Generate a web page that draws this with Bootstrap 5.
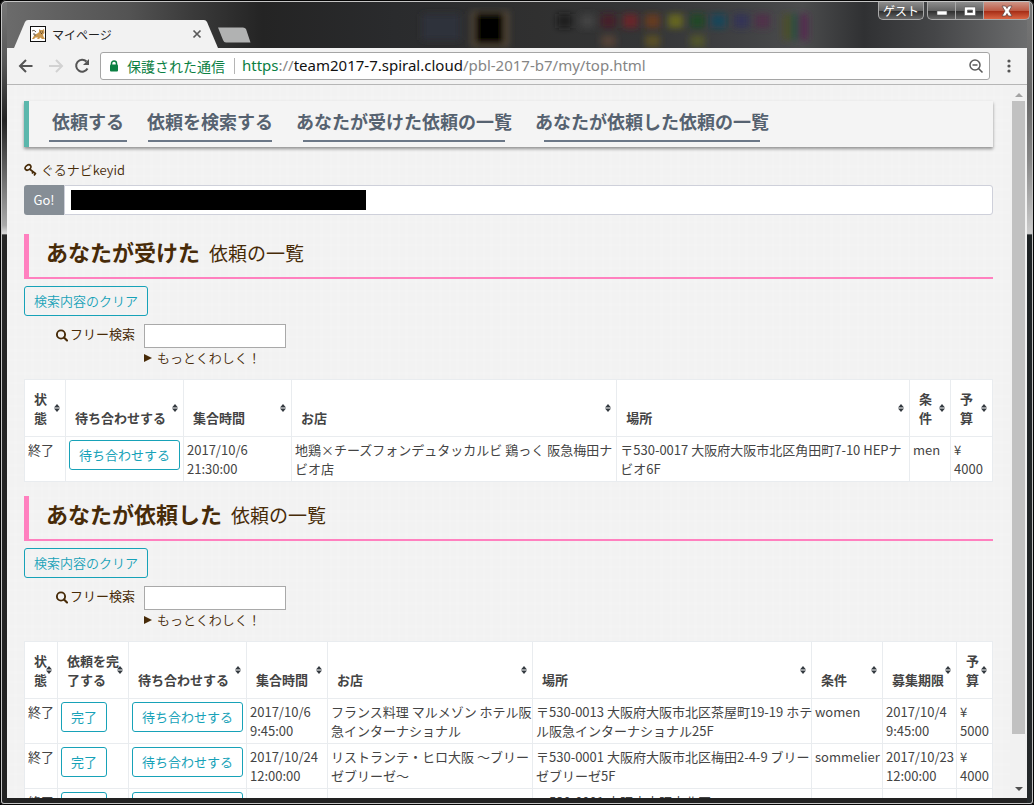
<!DOCTYPE html>
<html lang="ja">
<head>
<meta charset="utf-8">
<meta name="viewport" content="width=device-width, initial-scale=1">
<title>マイページ</title>
<link href="https://cdn.jsdelivr.net/npm/bootstrap@5.3.0/dist/css/bootstrap.min.css" rel="stylesheet">
<style>
  :root { --teal: #17a2b8; --brown: #472b08; }
  body { font-family: "Noto Sans CJK JP", "Noto Sans", sans-serif; font-size: 13px; line-height: 19px; color: var(--brown); background: #000; }
  button, input { font-family: inherit; }
  .thin { font-weight: 350; }

  /* window frame */
  .win { height: 100vh; padding: 2px 7px 7px; border-radius: 6px 6px 4px 4px; box-shadow: inset 0 0 0 1px #050505, inset 0 0 0 2px #c4c4c4;
    background:
      linear-gradient(180deg, #777 0, #555 8%, #222 15%, #555 20%, #aaa 28%, #ddd 29%, #262626 29.2%, #222) left / 7px 100% no-repeat,
      linear-gradient(180deg, #777 0, #666 12%, #888 20%, #ccc 29%, #1d2224 29.2%, #24282a) right / 7px 100% no-repeat,
      #222; }
  .titlebar { height: 46px; padding-left: 7px;
    background: linear-gradient(90deg, #6b6b6b 0, #535353 12%, #3b3b3b 18%, #242424 25%, #2a2b2d 38%, #303030 52%, #343536 62%, #404143 72%, #4b4c4d 78%, #303133 84%, #454648 91%, #6c6d6e 100%); }
  .backdrop { left: 0; top: 0; }
  .tab-shape { width: 204px; height: 28px; }
  .tab-shape > svg { left: 0; top: 0; }
  .tab-face { padding: 0 16px 0 16px; color: #222; font-size: 12px; gap: 6px; }
  .close-tab { background: none; border: 0; padding: 0; line-height: 0; }
  .new-tab { background: none; border: 0; padding: 0 0 5px; line-height: 0; }
  .caption-btn { border: 1px solid #aaa; border-top: 0; height: 18px; padding: 0; color: #fff; line-height: 0;
    background: linear-gradient(#8d8d8d, #646464 50%, #2c2c2c 52%, #666); }
  .guest { width: 46px; border-radius: 0 0 5px 5px; font-size: 12px; line-height: 16px; margin-right: 3px; }
  .caps { margin-right: -3px; }
  .cap-min { width: 29px; border-radius: 0 0 0 5px; }
  .cap-max { width: 28px; border-left: 0; }
  .cap-close { width: 46px; border-left: 0; border-radius: 0 0 5px 0; background: linear-gradient(#cd9587, #bd5c47 50%, #a32a14 52%, #d96544); }

  .toolbar { height: 36px; padding: 0 11px 1px 11px; background: #f2f2f2; }
  .toolbar button { background: none; border: 0; padding: 0; line-height: 0; }
  .reload { margin-left: 10px; }
  .omnibox { height: 28px; background: #fff; border: 1px solid #a5a5a5; border-radius: 3px; padding: 0 5px 0 8px; margin-left: 10px; margin-right: 12px; }
  .secure { font-size: 14px; color: #0b8043; border-right: 1px solid #b5b5b5; line-height: 16px; padding-right: 9px; margin-right: 7px; }
  .url { font-family: "Noto Sans", sans-serif; font-size: 15px; color: #858585; }
  .url b { font-weight: 400; color: #111; }
  .url i { font-style: normal; color: #0b8043; }

  .view { min-height: 0; border-top: 1px solid #b6b6b6; background: #f3f3f3; }
  .page { min-width: 0; padding: 16px 17px 0;
    background:
      repeating-linear-gradient(90deg, #ffffff18 0 2px, #0000 2px 7px, #ffffff18 7px 10px, #0000 10px 17px),
      repeating-linear-gradient(0deg, #ffffff18 0 2px, #0000 2px 9px, #ffffff18 9px 12px, #0000 12px 23px), #f2f2f2; }
  .vbar { width: 17px; background: #f1f1f1; padding: 5px 0; }
  .thumb { width: 13px; height: 90%; background: #c1c1c1; }

  .mainmenu { border-left: 5px solid #5bb7ac; background: #f4f4f4; box-shadow: 0 2px 3px #0006; padding: 2px 14px 7px; gap: 5px; }
  .mainmenu a { position: relative; padding: 6px 9px; font-size: 18px; line-height: 25px; font-weight: 700; color: #566270; text-decoration: none; }
  .mainmenu a::after { content: ""; position: absolute; left: 7%; right: 7%; bottom: -2px; height: 2px; background: #6b7787; }

  .keylabel { margin: 13px 0 6px; }
  .go { width: 40px; height: 30px; padding: 0; font-size: 13px; background: #868e96; color: #fff; border-radius: 3px 0 0 3px; }
  .keyfield { height: 30px; min-height: 0; border: 1px solid #ced0da; border-radius: 0 3px 3px 0; padding: 4px 8px; font-size: 13px; }
  .keyrow { margin-bottom: 19px; }
  .redact { left: 7px; top: 5px; width: 295px; height: 20px; background: #000; }

  .heading { border-left: 5px solid #ff80bf; border-bottom: 2px solid #ff80bf; font-size: 22px; line-height: 33px; padding: 1px 17px 9px; margin: 0 0 7px; font-weight: 700; color: var(--brown); }
  .heading span { font-size: 19px; font-weight: 400; line-height: 1; margin-left: 4px; }
  .btn-teal { --bs-btn-color: var(--teal); --bs-btn-border-color: var(--teal); --bs-btn-hover-bg: var(--teal); --bs-btn-hover-color: #fff; --bs-btn-hover-border-color: var(--teal);
    --bs-btn-padding-x: 9px; --bs-btn-padding-y: 4px; --bs-btn-font-size: 13px; --bs-btn-line-height: 20px; --bs-btn-border-radius: 3px; display: block; white-space: nowrap; }
  .btn-teal.thin { font-weight: 350; line-height: 19px; padding-bottom: 5px; }
  .search { padding-left: 31px; margin: 8px 0 12px; gap: 9px; }
  .search input { display: block; width: 142px; height: 24px; border: 1px solid #a9a9a9; background: #fff; }
  .search label svg { margin-right: 2px; }
  summary { list-style: none; }
  .tri { margin-right: 5px; }

  .list { table-layout: fixed; margin: 0 0 14px; background: #fff; font-size: 13px; border-color: #e9ecef; --bs-table-bg: #fff; --bs-table-color: #444; }
  .list th { position: relative; padding: 9px 8px 9px 9px; vertical-align: bottom; color: #444; border-width: 1px; }
  .list td { padding: 3px 1px 3px 3px; vertical-align: top; border-width: 1px; color: #444; }
  .list > :not(caption) > * { border-width: 0; }
  .list .sorter { position: absolute; right: 5px; top: 50%; transform: translateY(-50%); }
</style>
</head>
<body>
<svg class="d-none">
  <symbol id="sort" viewBox="0 0 6 8"><path d="M3 0 6 3.500H0zM3 8 0 4.500H6z" fill="#343a40"/></symbol>
  <symbol id="mag" viewBox="0 0 13 13"><circle cx="6" cy="5.500" r="4.100" fill="none" stroke="#472b08" stroke-width="1.900"/><path d="m9 8.500 3 3" stroke="#472b08" stroke-width="2.100" stroke-linecap="round"/></symbol>
</svg>
<div class="win d-flex flex-column">
  <header class="titlebar d-flex align-items-end position-relative flex-shrink-0">
    <svg class="backdrop position-absolute w-100 h-100" viewBox="0 0 1020 46" preserveAspectRatio="none" aria-hidden="true">
      <defs><filter id="soft"><feGaussianBlur stdDeviation="3"/></filter></defs>
      <g filter="url(#soft)">
        <rect x="415" y="12" width="38" height="26" fill="#2e323b"/>
        <rect x="464" y="9" width="38" height="36" fill="#544a38"/><rect x="468" y="11" width="29" height="31" fill="#030303"/>
        <g opacity=".8"><rect x="550" y="12" width="15" height="14" fill="#171717"/><rect x="573" y="12" width="15" height="14" fill="#454545"/><rect x="594" y="12" width="15" height="14" fill="#4b1d25"/>
        <rect x="616" y="12" width="15" height="14" fill="#751f27"/><rect x="638" y="12" width="15" height="14" fill="#713b1d"/><rect x="661" y="12" width="15" height="14" fill="#71701c"/>
        <rect x="683" y="12" width="15" height="14" fill="#164c24"/><rect x="704" y="12" width="15" height="14" fill="#124960"/><rect x="727" y="12" width="15" height="14" fill="#30305a"/><rect x="748" y="12" width="15" height="14" fill="#532a4b"/>
        <rect x="776" y="12" width="8" height="26" fill="#4d4f20"/><rect x="784" y="12" width="8" height="26" fill="#205040"/><rect x="792" y="12" width="9" height="26" fill="#552050"/>
        <rect x="594" y="33" width="15" height="12" fill="#5c4539"/><rect x="638" y="33" width="15" height="12" fill="#615423"/><rect x="683" y="33" width="15" height="12" fill="#555b28"/></g>
      </g>
    </svg>
    <div class="tab-shape position-relative">
      <svg class="position-absolute w-100 h-100" viewBox="0 0 204 28" preserveAspectRatio="none" aria-hidden="true"><path d="M0 28 11 2Q12 0 14 0H190Q192 0 193 2L204 28Z" fill="#f2f2f2"/></svg>
      <div class="tab-face position-relative d-flex align-items-center h-100">
        <svg width="16" height="16" viewBox="0 0 16 16" aria-hidden="true"><rect x=".5" y=".5" width="15" height="15" fill="#fff" stroke="#111"/><path d="m2 13 2.500-4L8 7l1-1V3l1.500 1h2L14 3l.5 4-1.500 1.500.5 2 1.500 2.500h-3l-1.500-1.500L9 13H7l1-1.500H5.500L4 13Z" fill="#c9974f"/><path d="M2 5q2-2 4 1M3 8q3-1 2 2" fill="none" stroke="#665c50"/><path d="M10 6h1M12 6h1M11 7.500h1" stroke="#543"/></svg>
        <span class="flex-grow-1">マイページ</span>
        <button class="close-tab" aria-label="タブを閉じる"><svg width="10" height="10" viewBox="0 0 10 10"><path d="m1.500 1.500 7 7m0-7-7 7" stroke="#5a5a5a" stroke-width="1.700"/></svg></button>
      </div>
    </div>
    <button class="new-tab position-relative" aria-label="新しいタブ"><svg width="33" height="16" viewBox="0 0 33 16"><path d="M0 .5H25Q27 .5 28 2L32.500 15.500H8Q6 15.500 5 13Z" fill="#b1b2b2"/></svg></button>
    <div class="ms-auto d-flex align-self-start position-relative caps">
      <button class="caption-btn guest">ゲスト</button>
      <button class="caption-btn cap-min" aria-label="最小化"><svg width="12" height="12"><rect x="1" y="6" width="10" height="4" fill="#fff" stroke="#555" stroke-width=".6"/></svg></button>
      <button class="caption-btn cap-max" aria-label="最大化"><svg width="12" height="12"><path d="M.5 2h11v8.500H.5zM3.500 5v2.500h5V5z" fill="#fff" fill-rule="evenodd" stroke="#555" stroke-width=".6"/></svg></button>
      <button class="caption-btn cap-close" aria-label="閉じる"><svg width="12" height="12" viewBox="0 0 12 12"><path d="M1 1h3.500L6 3.500 7.500 1H11L8 6l3 5H7.500L6 8.500 4.500 11H1L4 6z" fill="#fff" stroke="#544" stroke-width=".7"/></svg></button>
    </div>
  </header>

  <div class="toolbar d-flex align-items-center flex-shrink-0">
    <button aria-label="戻る"><svg width="15" height="14" viewBox="0 0 15 14"><path d="M14.500 7H2M8 1 2 7l6 6" fill="none" stroke="#555" stroke-width="2"/></svg></button>
    <button class="ms-3" aria-label="進む" disabled><svg width="15" height="14" viewBox="0 0 15 14"><path d="M0 7h12M7 1l6 6-6 6" fill="none" stroke="#d2d2d2" stroke-width="2"/></svg></button>
    <button class="reload" aria-label="再読み込み"><svg width="16" height="16" viewBox="0 0 16 16"><path d="M13.500 10.500a6 6 0 1 1-1-7" fill="none" stroke="#555" stroke-width="2"/><path d="M15 1v6H9z" fill="#555"/></svg></button>
    <div class="omnibox flex-grow-1 d-flex align-items-center">
      <svg class="me-2" width="10" height="12" viewBox="0 0 10 12" aria-hidden="true"><path d="M2.500 5V3.500a2.500 2.500 0 0 1 5 0V5" fill="none" stroke="#0b8043" stroke-width="1.500"/><rect x="1" y="4.500" width="8" height="7" rx="1" fill="#0b8043"/></svg>
      <span class="secure text-nowrap">保護された通信</span>
      <span class="url flex-grow-1 text-nowrap"><i>https</i>://<b>team2017-7.spiral.cloud</b>/pbl-2017-b7/my/top.html</span>
      <button aria-label="ズーム"><svg width="16" height="16" viewBox="0 0 16 16"><circle cx="7" cy="7" r="5" fill="none" stroke="#5a5a5a" stroke-width="1.500"/><path d="M4.500 7h5M10.500 10.500 14.500 14.500" stroke="#5a5a5a" stroke-width="1.600"/></svg></button>
    </div>
    <button aria-label="メニュー"><svg width="14" height="16" viewBox="0 0 14 16"><g fill="#555"><circle cx="7" cy="3" r="1.600"/><circle cx="7" cy="8" r="1.600"/><circle cx="7" cy="13" r="1.600"/></g></svg></button>
  </div>

  <div class="view d-flex flex-grow-1 overflow-hidden">
    <main class="page flex-grow-1">
      <nav class="mainmenu d-flex">
        <a href="#">依頼する</a><a href="#">依頼を検索する</a><a href="#">あなたが受けた依頼の一覧</a><a href="#">あなたが依頼した依頼の一覧</a>
      </nav>

      <label class="keylabel d-flex align-items-center gap-1 thin" for="keyid">
        <svg width="13" height="13" viewBox="0 0 13 13" aria-hidden="true"><ellipse cx="4" cy="4.500" rx="3.200" ry="2.300" transform="rotate(-35 4 4.500)" fill="none" stroke="#472b08" stroke-width="1.700"/><path d="m5.500 6 6.500 5M8 10.500l1.500-2M10 12.500l1.500-2" fill="none" stroke="#472b08" stroke-width="1.700"/></svg>
        <span>ぐるナビkeyid</span>
      </label>
      <div class="keyrow d-flex">
        <button class="btn go border-0">Go!</button>
        <div class="position-relative flex-grow-1">
          <input class="form-control keyfield" id="keyid" type="text">
          <span class="redact position-absolute"></span>
        </div>
      </div>

      <h2 class="heading">あなたが受けた <span>依頼の一覧</span></h2>
      <button class="btn btn-teal thin">検索内容のクリア</button>
      <div class="search d-flex align-items-start">
        <label for="free1"><svg width="13" height="13" aria-hidden="true"><use href="#mag"/></svg>フリー検索</label>
        <div>
          <input id="free1" type="text">
          <details><summary class="thin d-flex align-items-center"><svg class="tri" width="8" height="8"><path d="M0 0 8 4 0 8z" fill="#472b08"/></svg>もっとくわしく！</summary></details>
        </div>
      </div>
      <table class="table table-bordered list">
        <colgroup><col style="width:41px"><col style="width:118px"><col style="width:108px"><col style="width:33.6%"><col><col style="width:41px"><col style="width:42px"></colgroup>
        <thead><tr>
          <th>状態<svg class="sorter" width="6" height="8"><use href="#sort"/></svg></th>
          <th>待ち合わせする<svg class="sorter" width="6" height="8"><use href="#sort"/></svg></th>
          <th>集合時間<svg class="sorter" width="6" height="8"><use href="#sort"/></svg></th>
          <th>お店<svg class="sorter" width="6" height="8"><use href="#sort"/></svg></th>
          <th>場所<svg class="sorter" width="6" height="8"><use href="#sort"/></svg></th>
          <th>条件<svg class="sorter" width="6" height="8"><use href="#sort"/></svg></th>
          <th>予算<svg class="sorter" width="6" height="8"><use href="#sort"/></svg></th>
        </tr></thead>
        <tbody><tr>
          <td>終了</td><td><button class="btn btn-teal">待ち合わせする</button></td><td>2017/10/6 21:30:00</td>
          <td>地鶏×チーズフォンデュタッカルビ 鶏っく 阪急梅田ナ<wbr>ビオ店</td><td>〒530-0017 大阪府大阪市北区角田町7-10 HEPナ<wbr>ビオ6F</td><td>men</td><td>¥<br>4000</td>
        </tr></tbody>
      </table>

      <h2 class="heading">あなたが依頼した <span>依頼の一覧</span></h2>
      <button class="btn btn-teal thin">検索内容のクリア</button>
      <div class="search d-flex align-items-start">
        <label for="free2"><svg width="13" height="13" aria-hidden="true"><use href="#mag"/></svg>フリー検索</label>
        <div>
          <input id="free2" type="text">
          <details><summary class="thin d-flex align-items-center"><svg class="tri" width="8" height="8"><path d="M0 0 8 4 0 8z" fill="#472b08"/></svg>もっとくわしく！</summary></details>
        </div>
      </div>
      <table class="table table-bordered list">
        <colgroup><col style="width:33px"><col style="width:71px"><col style="width:118px"><col style="width:81px"><col style="width:205px"><col><col style="width:71px"><col style="width:74px"><col style="width:36px"></colgroup>
        <thead><tr>
          <th>状態<svg class="sorter" width="6" height="8"><use href="#sort"/></svg></th>
          <th>依頼を完了する<svg class="sorter" width="6" height="8"><use href="#sort"/></svg></th>
          <th>待ち合わせする<svg class="sorter" width="6" height="8"><use href="#sort"/></svg></th>
          <th>集合時間<svg class="sorter" width="6" height="8"><use href="#sort"/></svg></th>
          <th>お店<svg class="sorter" width="6" height="8"><use href="#sort"/></svg></th>
          <th>場所<svg class="sorter" width="6" height="8"><use href="#sort"/></svg></th>
          <th>条件<svg class="sorter" width="6" height="8"><use href="#sort"/></svg></th>
          <th>募集期限<svg class="sorter" width="6" height="8"><use href="#sort"/></svg></th>
          <th>予算<svg class="sorter" width="6" height="8"><use href="#sort"/></svg></th>
        </tr></thead>
        <tbody>
          <tr><td>終了</td><td><button class="btn btn-teal">完了</button></td><td><button class="btn btn-teal">待ち合わせする</button></td><td>2017/10/6 9:45:00</td>
            <td class="text-nowrap">フランス料理 マルメゾン ホテル阪<br>急インターナショナル</td><td class="text-nowrap">〒530-0013 大阪府大阪市北区茶屋町19-19 ホテ<br>ル阪急インターナショナル25F</td><td>women</td><td>2017/10/4 9:45:00</td><td>¥<br>5000</td></tr>
          <tr><td>終了</td><td><button class="btn btn-teal">完了</button></td><td><button class="btn btn-teal">待ち合わせする</button></td><td>2017/10/24 12:00:00</td>
            <td class="text-nowrap">リストランテ・ヒロ大阪 ～ブリー<br>ゼブリーゼ～</td><td class="text-nowrap">〒530-0001 大阪府大阪市北区梅田2-4-9 ブリー<br>ゼブリーゼ5F</td><td>sommelier</td><td>2017/10/23 12:00:00</td><td>¥<br>4000</td></tr>
          <tr><td>終了</td><td><button class="btn btn-teal">完了</button></td><td><button class="btn btn-teal">待ち合わせする</button></td><td></td>
            <td></td><td>〒530-0001 大阪府大阪市北区</td><td></td><td></td><td></td></tr>
        </tbody>
      </table>
    </main>
    <div class="vbar flex-shrink-0 d-flex flex-column align-items-center" aria-hidden="true">
      <svg width="8" height="11" class="flex-shrink-0"><path d="M0 7 4 3 8 7z" fill="#a3a3a3"/></svg>
      <div class="thumb"></div>
      <svg width="8" height="8" class="flex-shrink-0 mt-auto"><path d="M0 2h8L4 6z" fill="#505050"/></svg>
    </div>
  </div>
</div>
<script src="https://cdn.jsdelivr.net/npm/bootstrap@5.3.0/dist/js/bootstrap.bundle.min.js"></script>
</body>
</html>
